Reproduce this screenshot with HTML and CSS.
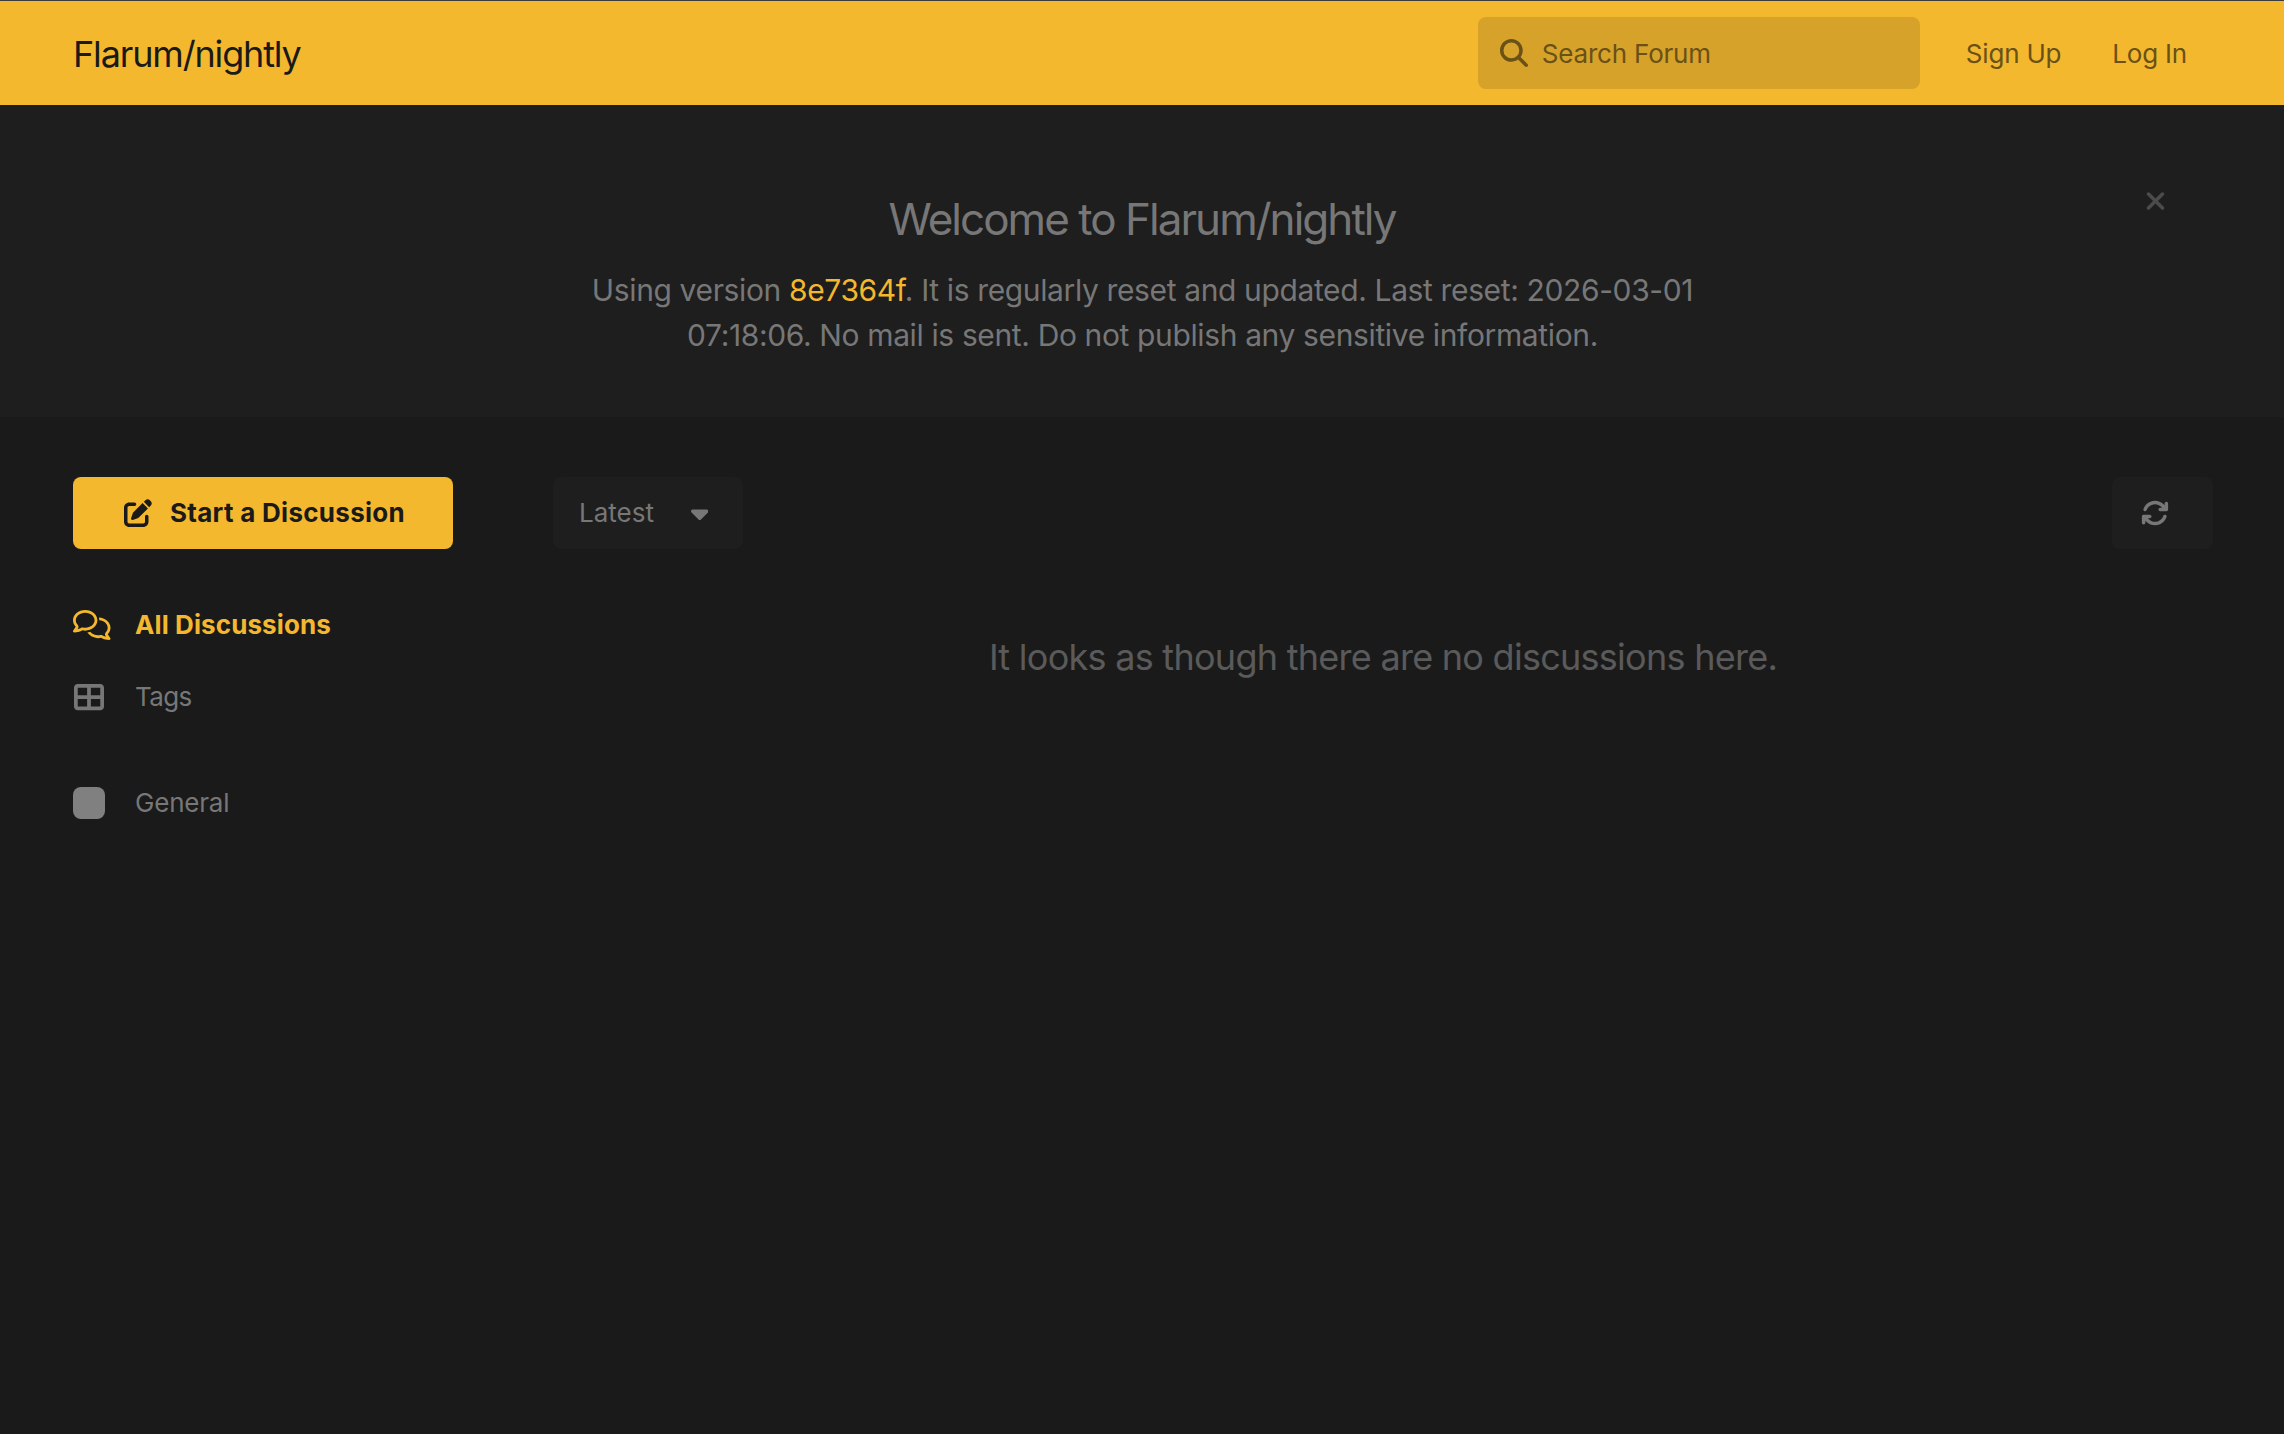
FILE: index.html
```html
<!DOCTYPE html>
<html lang="en">
<head>
    <meta charset="UTF-8">
    <meta name="viewport" content="width=device-width, initial-scale=1.0">
    <title>Flarum/nightly</title>
    <link rel="stylesheet" href="styles.css">
</head>
<body>
    <header class="header">
        <a class="logo" href="#">Flarum/nightly</a>
        <div class="header-controls">
            <label class="search">
                <svg class="search-icon" viewBox="0 0 512 512"><path d="M416 208c0 45.9-14.9 88.3-40 122.7L502.6 457.4c12.5 12.5 12.5 32.8 0 45.3s-32.8 12.5-45.3 0L330.7 376c-34.4 25.2-76.8 40-122.7 40C93.1 416 0 322.9 0 208S93.1 0 208 0S416 93.1 416 208zM208 352a144 144 0 1 0 0-288 144 144 0 1 0 0 288z"/></svg>
                <input type="search" placeholder="Search Forum">
            </label>
            <a class="sign-up" href="#">Sign Up</a>
            <a class="log-in" href="#">Log In</a>
        </div>
    </header>

    <section class="hero">
        <button class="hero-close" aria-label="Close">
            <svg viewBox="0 0 384 512"><path d="M342.6 150.6c12.5-12.5 12.5-32.8 0-45.3s-32.8-12.5-45.3 0L192 210.7 86.6 105.4c-12.5-12.5-32.8-12.5-45.3 0s-12.5 32.8 0 45.3L146.7 256 41.4 361.4c-12.5 12.5-12.5 32.8 0 45.3s32.8 12.5 45.3 0L192 301.3 297.4 406.6c12.5 12.5 32.8 12.5 45.3 0s12.5-32.8 0-45.3L237.3 256 342.6 150.6z"/></svg>
        </button>
        <h1>Welcome to Flarum/nightly</h1>
        <p>Using version <a href="#">8e7364f</a>. It is regularly reset and updated. Last reset: 2026-03-01 07:18:06. No mail is sent. Do not publish any sensitive information.</p>
    </section>

    <div class="container">
        <nav class="sidebar">
            <button class="start-btn">
                <svg viewBox="0 0 512 512"><path d="M471.6 21.7c-21.9-21.9-57.3-21.9-79.2 0L362.3 51.7l97.9 97.9 30.1-30.1c21.9-21.9 21.9-57.3 0-79.2L471.6 21.7zm-299.2 220c-6.1 6.1-10.8 13.6-13.5 21.9l-29.6 88.8c-2.9 8.6-.6 18.1 5.8 24.6s15.9 8.7 24.6 5.8l88.8-29.6c8.2-2.7 15.7-7.4 21.9-13.5L437.7 172.3 339.7 74.3 172.4 241.7zM96 64C43 64 0 107 0 160V416c0 53 43 96 96 96H352c53 0 96-43 96-96V320c0-17.7-14.3-32-32-32s-32 14.3-32 32v96c0 17.7-14.3 32-32 32H96c-17.7 0-32-14.3-32-32V160c0-17.7 14.3-32 32-32h96c17.7 0 32-14.3 32-32s-14.3-32-32-32H96z"/></svg>
                <span>Start a Discussion</span>
            </button>
            <ul class="nav-list">
                <li class="active">
                    <span class="nav-icon"><svg class="icon-comments" viewBox="0 0 640 512"><path d="M88.2 309.1c9.8-18.3 6.8-40.8-7.5-55.8C59.4 230.9 48 204 48 176c0-63.5 63.8-128 160-128s160 64.5 160 128s-63.8 128-160 128c-13.1 0-25.8-1.3-37.8-3.6c-10.4-2-21.2-.6-30.7 4.2c-4.1 2.1-8.3 4.1-12.6 6c-16 7.2-32.9 13.5-49.9 18c2.8-4.6 5.4-9.1 7.9-13.6c1.1-1.9 2.2-3.9 3.2-5.9zM208 352c114.9 0 208-78.8 208-176S322.9 0 208 0S0 78.8 0 176c0 41.8 17.2 80.1 45.9 110.3c-.9 1.7-1.9 3.5-2.8 5.1c-10.3 18.4-22.3 36.5-36.6 52.1c-6.6 7-8.3 17.2-4.6 25.9C5.8 378.3 14.4 384 24 384c43 0 86.5-13.3 122.7-29.7c4.8-2.2 9.6-4.5 14.2-6.8c15.1 3 30.9 4.5 47.1 4.5zM432 480c16.2 0 31.9-1.6 47.1-4.5c4.6 2.3 9.4 4.6 14.2 6.8C529.5 498.7 573 512 616 512c9.6 0 18.2-5.7 22-14.5c3.8-8.8 2-19-4.6-25.9c-14.2-15.6-26.2-33.7-36.6-52.1c-.9-1.7-1.9-3.4-2.8-5.1C622.8 384.1 640 345.8 640 304c0-94.4-87.9-171.5-198.2-175.8c4.1 15.2 6.2 31.2 6.2 47.8l0 .6c87.2 6.7 144 67.5 144 127.4c0 28-11.4 54.9-32.7 77.2c-14.3 15-17.3 37.6-7.5 55.8c1.1 2 2.2 4 3.2 5.9c2.5 4.5 5.2 9 7.9 13.6c-17-4.5-33.9-10.7-49.9-18c-4.3-1.9-8.5-3.9-12.6-6c-9.5-4.8-20.3-6.2-30.7-4.2c-12.1 2.4-24.8 3.6-37.8 3.6c-61.7 0-110-26.5-136.8-62.3c-16 5.4-32.8 9.4-50 11.8C279 439.8 350 480 432 480z"/></svg></span>
                    <a href="#">All Discussions</a>
                </li>
                <li class="tags">
                    <span class="nav-icon"><svg class="icon-tags" viewBox="0 0 512 512"><path d="M448 96V224H288V96H448zm0 192V416H288V288H448zM224 224H64V96H224V224zM64 288H224V416H64V288zM64 32C28.7 32 0 60.7 0 96V416c0 35.3 28.7 64 64 64H448c35.3 0 64-28.7 64-64V96c0-35.3-28.7-64-64-64H64z"/></svg></span>
                    <a href="#">Tags</a>
                </li>
                <li class="general">
                    <span class="nav-icon"><span class="tag-color"></span></span>
                    <a href="#">General</a>
                </li>
            </ul>
        </nav>

        <main class="content">
            <div class="toolbar">
                <button class="sort-btn">
                    <span>Latest</span>
                    <svg viewBox="0 0 320 512"><path d="M137.4 374.6c12.5 12.5 32.8 12.5 45.3 0l128-128c9.2-9.2 11.9-22.9 6.9-34.9s-16.6-19.8-29.6-19.8L32 192c-12.9 0-24.6 7.8-29.6 19.8s-2.2 25.7 6.9 34.9l128 128z"/></svg>
                </button>
                <button class="refresh-btn" aria-label="Refresh">
                    <svg viewBox="0 0 512 512"><path d="M105.1 202.6c7.7-21.8 20.2-42.3 37.8-59.8c62.5-62.5 163.8-62.5 226.3 0L386.3 160H352c-17.7 0-32 14.3-32 32s14.3 32 32 32H463.5h.4c17.7 0 32-14.3 32-32V80c0-17.7-14.3-32-32-32s-32 14.3-32 32v35.2L414.4 97.6c-87.5-87.5-229.3-87.5-316.8 0C73.2 122 55.6 150.7 44.8 181.4c-5.9 16.7 2.9 34.9 19.5 40.8s34.9-2.9 40.8-19.5zM39 289.3c-5 1.5-9.8 4.2-13.7 8.2c-4 4-6.7 8.8-8.1 14c-.3 1.2-.6 2.5-.8 3.8c-.3 1.7-.4 3.4-.4 5.1V432c0 17.7 14.3 32 32 32s32-14.3 32-32V396.9l17.6 17.5c87.5 87.4 229.3 87.4 316.7 0c24.4-24.4 42.1-53.1 52.9-83.7c5.9-16.7-2.9-34.9-19.5-40.8s-34.9 2.9-40.8 19.5c-7.7 21.8-20.2 42.3-37.8 59.8c-62.5 62.5-163.8 62.5-226.3 0l-.1-.1L125.6 352H160c17.7 0 32-14.3 32-32s-14.3-32-32-32H48.4c-1.6 0-3.2 .1-4.8 .3s-3.1 .5-4.6 1z"/></svg>
                </button>
            </div>
            <p class="empty">It looks as though there are no discussions here.</p>
        </main>
    </div>
</body>
</html>
```
FILE: styles.css
```css
* {
    box-sizing: border-box;
}

body {
    margin: 0;
    min-height: 1434px;
    background: #1a1a1a;
    color: #777;
    font-family: Inter, "Liberation Sans", sans-serif;
    font-size: 26px;
    line-height: 40px;
    letter-spacing: -0.2px;
}

a {
    color: inherit;
    text-decoration: none;
}

button {
    border: none;
    padding: 0;
    font: inherit;
    color: inherit;
    letter-spacing: inherit;
    cursor: pointer;
}

svg {
    display: block;
    flex: none;
    height: 28px;
    fill: currentColor;
}

/* Header */
.header {
    display: flex;
    justify-content: space-between;
    align-items: center;
    height: 105px;
    padding: 0 97px 0 73px;
    border-top: 1px solid #3c3c3c;
    background: #f4b82e;
    color: #695117;
}

.logo {
    padding-top: 2px;
    color: #1a1a1a;
    font-size: 36px;
    letter-spacing: -1.15px;
}

.header-controls {
    display: flex;
    align-items: center;
}

.header-controls a {
    padding-top: 2px;
}

.search {
    display: flex;
    align-items: center;
    gap: 14px;
    width: 442px;
    height: 72px;
    padding-left: 22px;
    border-radius: 8px;
    background: #d7a229;
}

.search input {
    flex: 1;
    min-width: 0;
    padding: 2px 0 0;
    border: none;
    outline: none;
    background: none;
    font: inherit;
    letter-spacing: -0.2px;
}

.search input::placeholder {
    color: #695117;
    opacity: 1;
}

.sign-up {
    margin-left: 46px;
}

.log-in {
    margin-left: 51px;
}

/* Welcome hero */
.hero {
    position: relative;
    height: 312px;
    padding-top: 85px;
    background: #1e1e1e;
    text-align: center;
}

.hero h1 {
    margin: 0 0 20px;
    font-size: 44px;
    font-weight: 400;
    line-height: 58px;
    letter-spacing: -1.97px;
}

.hero p {
    width: 1120px;
    margin: 0 auto;
    padding-left: 1px;
    font-size: 30px;
    line-height: 45px;
    letter-spacing: -0.37px;
}

.hero p a {
    color: #f4b82e;
}

.hero-close {
    position: absolute;
    top: 82px;
    right: 118px;
    background: none;
    color: #4b4b4b;
}

/* Page content */
.container {
    display: flex;
    gap: 100px;
    padding: 60px 71px 0 73px;
}

.sidebar {
    width: 380px;
}

.start-btn {
    display: flex;
    align-items: center;
    gap: 18px;
    width: 100%;
    height: 72px;
    padding-left: 51px;
    border-radius: 8px;
    background: #f4b82e;
    color: #1a1a1a;
    font-weight: 700;
    letter-spacing: 0.28px;
}

.nav-list {
    margin: 40px 0 0;
    padding: 0;
    list-style: none;
}

.nav-list li {
    display: flex;
    align-items: center;
    height: 72px;
}

.nav-list .active {
    color: #f4b82e;
    font-weight: 700;
    letter-spacing: 0.1px;
}

.nav-list .tags {
    letter-spacing: -0.6px;
}

.nav-list .general {
    margin-top: 34px;
}

.nav-icon {
    width: 62px;
}

.icon-comments {
    height: 30px;
}

.icon-tags {
    height: 30px;
    margin-left: 1px;
}

.tag-color {
    display: block;
    width: 32px;
    height: 32px;
    border-radius: 8px;
    background: #808080;
}

.content {
    flex: 1;
}

.toolbar {
    display: flex;
    justify-content: space-between;
}

.toolbar button {
    display: flex;
    align-items: center;
    height: 72px;
    border-radius: 8px;
    background: #1e1e1e;
}

.toolbar .sort-btn {
    justify-content: space-between;
    width: 190px;
    padding: 0 35px 0 26px;
    letter-spacing: 0;
}

.toolbar .refresh-btn {
    width: 101px;
    padding-left: 29px;
}

.empty {
    margin: 88px 0 0;
    color: #5a5a5a;
    font-size: 36px;
    letter-spacing: -0.73px;
    text-align: center;
}
```
